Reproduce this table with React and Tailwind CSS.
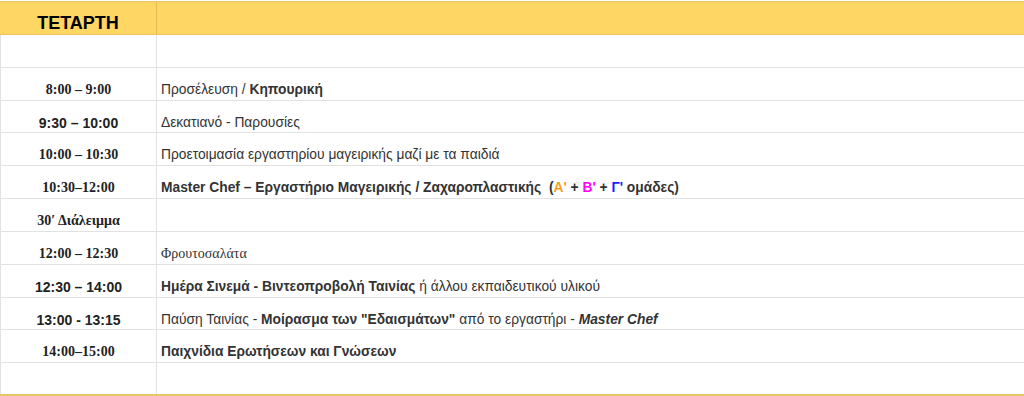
import React from "react";

const sans = { fontFamily: '"Liberation Sans", Arial, sans-serif' };
const serif = { fontFamily: '"Liberation Serif", "Times New Roman", serif' };

function Row({ left, right, leftSerif, h = "h-[33px]" }) {
  return (
    <div className={`grid grid-cols-[157px_1fr] ${h} border-b border-[#e2e2e2]`}>
      <div
        className="flex items-start justify-center pt-[14px] leading-[16px] border-l border-r border-[#e2e2e2] font-bold text-[14px] text-[#222]"
        style={leftSerif ? serif : sans}
      >
        {left}
      </div>
      <div className="flex items-start pt-[14px] leading-[16px] pl-[4px] text-[13.8px] text-[#333]" style={sans}>
        <span>{right}</span>
      </div>
    </div>
  );
}

export default function App() {
  return (
    <div className="w-[1024px] h-[396px] bg-white overflow-hidden pt-[1px]">
      <div className="grid grid-cols-[157px_1fr] h-[34px] bg-[#fdd663] border-t border-b border-[#ebc65c]">
        <div
          className="flex items-start justify-center pt-[12px] leading-[18px] border-r border-[#e0bd55] text-[18px] font-bold text-black"
          style={sans}
        >
          ΤΕΤΑΡΤΗ
        </div>
        <div />
      </div>
      <Row left="" right="" />
      <Row leftSerif left="8:00 – 9:00" right={<>Προσέλευση / <b>Κηπουρική</b></>} />
      <Row h="h-[32px]" left="9:30 – 10:00" right="Δεκατιανό - Παρουσίες" />
      <Row leftSerif left="10:00 – 10:30" right="Προετοιμασία εργαστηρίου μαγειρικής μαζί με τα παιδιά" />
      <Row
        leftSerif
        left="10:30–12:00"
        right={
          <b>
            Master Chef – Εργαστήριο Μαγειρικής / Ζαχαροπλαστικής&nbsp; (<span className="text-[#f6a019]">Α'</span> +{" "}
            <span className="text-[#ff00ff]">Β'</span> + <span className="text-[#1c1cff]">Γ'</span> ομάδες)
          </b>
        }
      />
      <Row leftSerif left="30′ Διάλειμμα" right="" />
      <Row
        leftSerif
        left="12:00 – 12:30"
        right={<span style={serif} className="text-[14px]">Φρουτοσαλάτα</span>}
      />
      <Row
        left="12:30 – 14:00"
        right={<><b>Ημέρα Σινεμά - Βιντεοπροβολή Ταινίας</b> ή άλλου εκπαιδευτικού υλικού</>}
      />
      <Row
        h="h-[32px]"
        left="13:00 - 13:15"
        right={<>Παύση Ταινίας - <b>Μοίρασμα των "Εδαισμάτων"</b> από το εργαστήρι - <b><i>Master Chef</i></b></>}
      />
      <Row leftSerif left="14:00–15:00" right={<b>Παιχνίδια Ερωτήσεων και Γνώσεων</b>} />
      <div className="grid grid-cols-[157px_1fr] h-[33px] border-b-2 border-[#e6c66a]">
        <div className="border-l border-r border-[#e2e2e2]" />
        <div />
      </div>
    </div>
  );
}
